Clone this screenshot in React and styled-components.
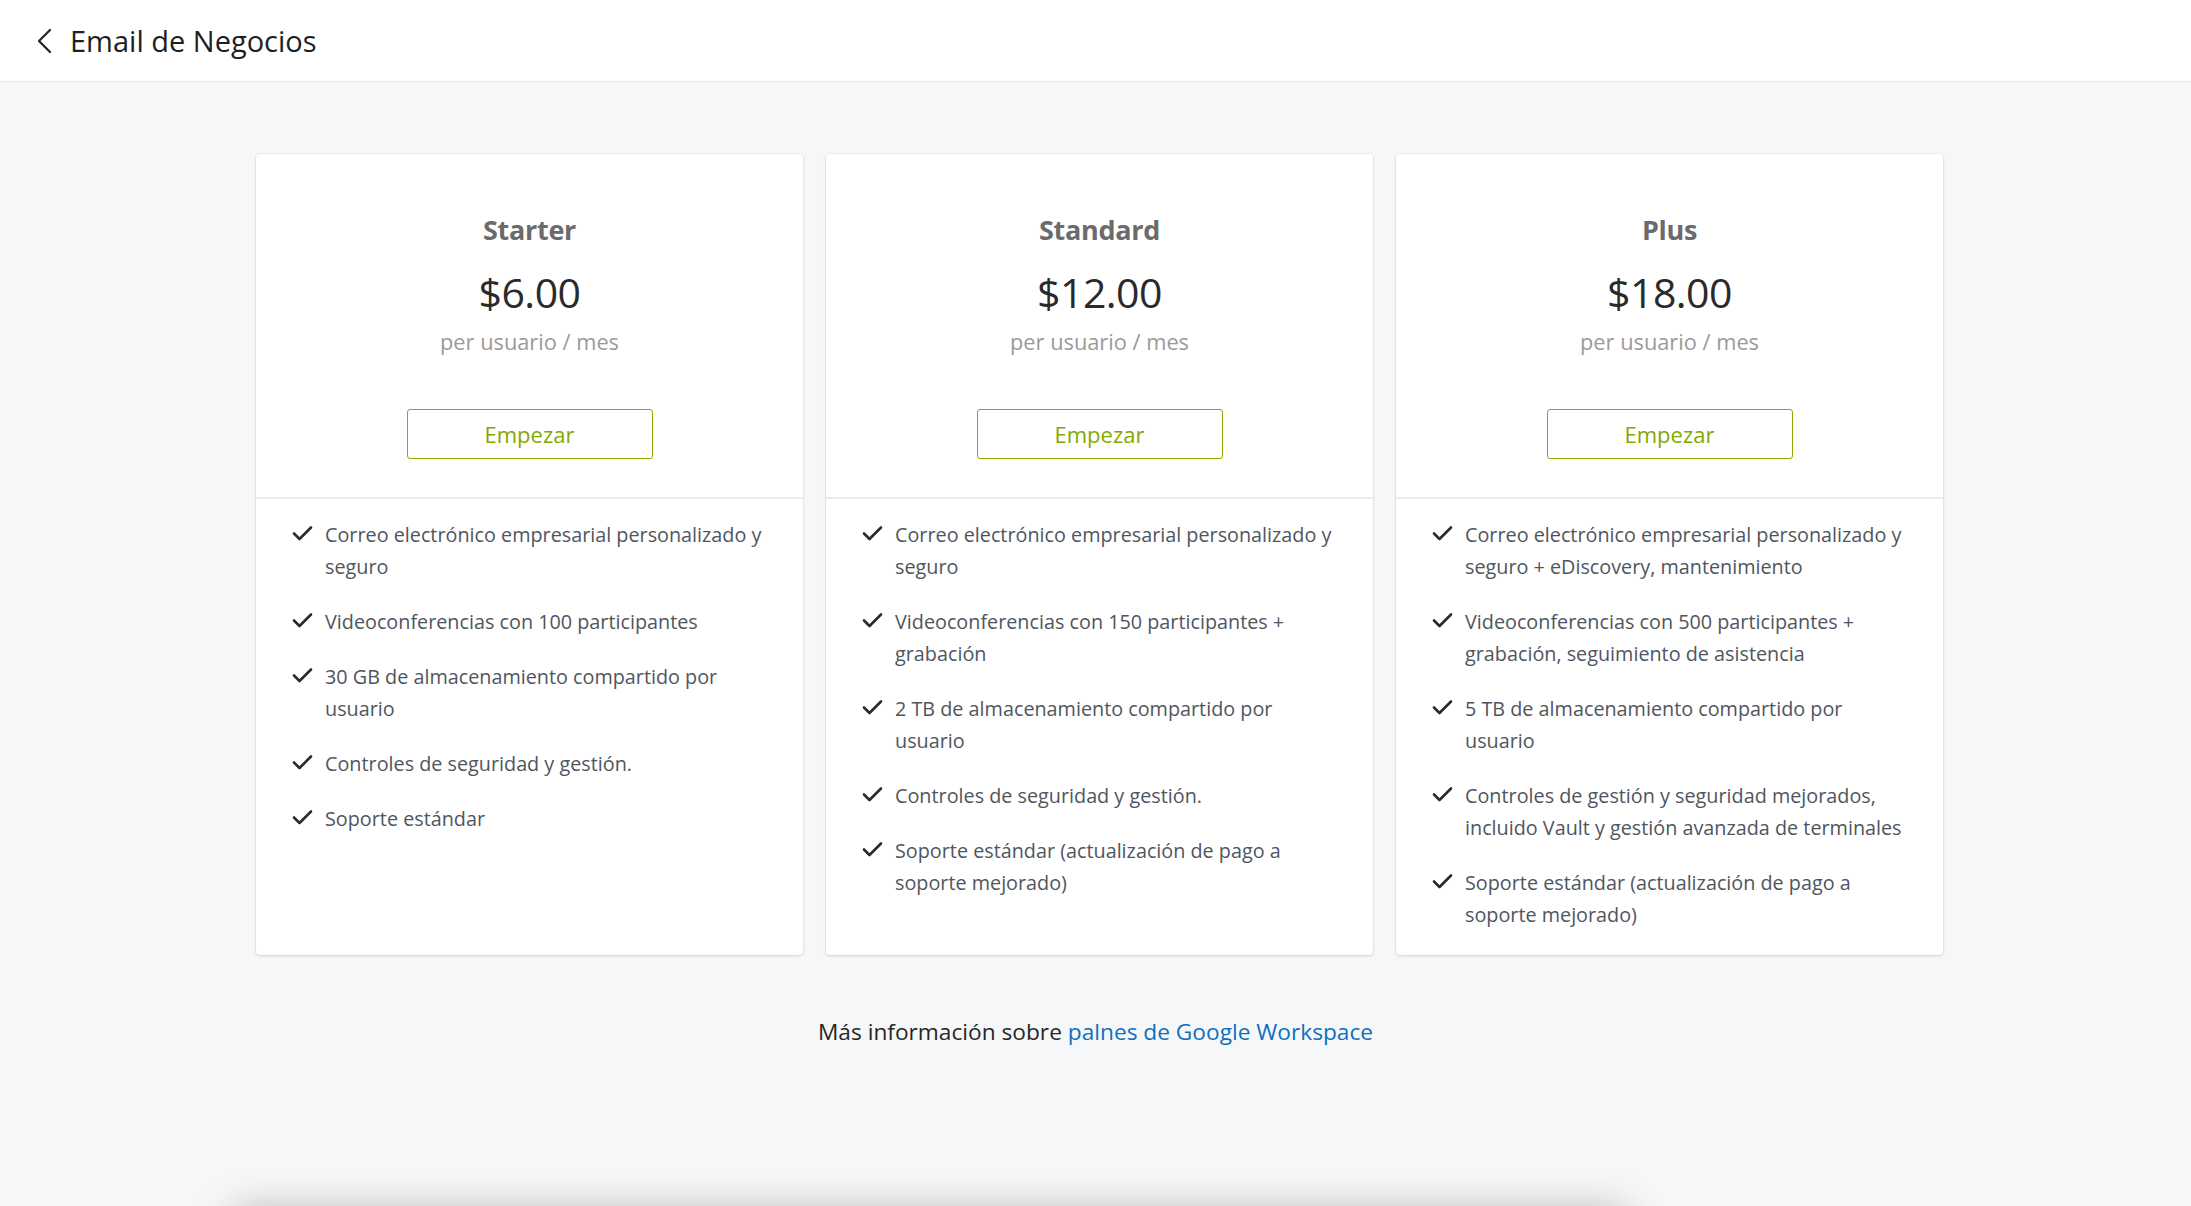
import React from "react";
import styled, { createGlobalStyle } from "styled-components";

const Global = createGlobalStyle`
  html, body { margin: 0; padding: 0; }
  body { background: #f6f7f9; font-family: "Open Sans", Lato, sans-serif; -webkit-font-smoothing: antialiased; }
  * { box-sizing: border-box; }
`;

const Page = styled.div`
  height: 100vh;
  overflow: hidden;
  display: flex;
  flex-direction: column;
`;

const Header = styled.header`
  height: 82px;
  flex: none;
  background: #fff;
  border-bottom: 1px solid #e6e8eb;
  display: flex;
  align-items: center;
  padding-left: 36px;
  gap: 16px;
`;

const BackButton = styled.button`
  border: 0;
  background: none;
  padding: 0;
  display: flex;
  align-items: center;
  color: #222;
  cursor: pointer;
`;

const Title = styled.h1`
  margin: 0;
  font-size: 29px;
  font-weight: 400;
  color: #1f1f1f;
`;

const Main = styled.main`
  padding-top: 72px;
  display: flex;
  flex-direction: column;
  align-items: center;
`;

const Grid = styled.div`
  display: grid;
  grid-template-columns: repeat(3, 547px);
  gap: 23px;
  margin-left: 8px;
`;

const Card = styled.section`
  background: #fff;
  border-radius: 4px;
  box-shadow: 0 1px 3px rgba(0, 0, 0, 0.13), 0 0 0 1px rgba(0, 0, 0, 0.03);
  display: flex;
  flex-direction: column;
`;

const CardHead = styled.div`
  padding: 60px 0 38px;
  display: flex;
  flex-direction: column;
  align-items: center;
  border-bottom: 2px solid #e8eaed;
`;

const PlanName = styled.h2`
  margin: 0;
  font-size: 27px;
  line-height: 32px;
  font-weight: 700;
  color: #6b6b6b;
  letter-spacing: -0.3px;
`;

const Price = styled.div`
  margin-top: 22px;
  font-size: 41px;
  line-height: 48px;
  color: #2a2a2a;
  letter-spacing: -0.5px;
`;

const Per = styled.div`
  margin-top: 12px;
  font-size: 21.8px;
  line-height: 28px;
  color: #9a9a9a;
`;

const StartButton = styled.button`
  margin-top: 53px;
  width: 246px;
  height: 50px;
  border: 1.5px solid #8aab00;
  border-radius: 3px;
  background: #fff;
  color: #84a800;
  font-family: inherit;
  font-size: 22px;
  cursor: pointer;
`;

const Features = styled.ul`
  list-style: none;
  margin: 0;
  padding: 20px 34px 24px 36px;
  display: flex;
  flex-direction: column;
  gap: 23px;
`;

const Feature = styled.li`
  display: flex;
  gap: 11px;
  font-size: 19.8px;
  line-height: 32px;
  color: #4f5660;
`;

const CheckBox = styled.span`
  flex: none;
  width: 22px;
  height: 32px;
  display: flex;
  align-items: center;
  padding-bottom: 4px;
`;

const Footer = styled.p`
  margin: 62px 0 0;
  font-size: 22.7px;
  line-height: 30px;
  color: #262626;
`;

const Link = styled.a`
  color: #0e6fbe;
  text-decoration: none;
`;

const Sheet = styled.div`
  margin-top: 166px;
  margin-left: 232px;
  width: 1396px;
  height: 300px;
  flex: none;
  background: #fff;
  border-radius: 12px;
  box-shadow: 0 -2px 40px rgba(0, 0, 0, 0.28);
`;

const Check = () => (
  <svg width="21" height="16" viewBox="0 0 21 16" fill="none">
    <path d="M2 8.5 L7.5 14 L19 2.5" stroke="#2b2b2b" strokeWidth="2.6" strokeLinecap="round" strokeLinejoin="round" />
  </svg>
);

const Chevron = () => (
  <svg width="18" height="26" viewBox="0 0 18 26" fill="none">
    <path d="M14 2 L3 13 L14 24" stroke="#222" strokeWidth="2.2" strokeLinecap="round" strokeLinejoin="round" />
  </svg>
);

const plans = [
  {
    name: "Starter",
    price: "$6.00",
    features: [
      "Correo electrónico empresarial personalizado y seguro",
      "Videoconferencias con 100 participantes",
      "30 GB de almacenamiento compartido por usuario",
      "Controles de seguridad y gestión.",
      "Soporte estándar",
    ],
  },
  {
    name: "Standard",
    price: "$12.00",
    features: [
      "Correo electrónico empresarial personalizado y seguro",
      "Videoconferencias con 150 participantes + grabación",
      "2 TB de almacenamiento compartido por usuario",
      "Controles de seguridad y gestión.",
      "Soporte estándar (actualización de pago a soporte mejorado)",
    ],
  },
  {
    name: "Plus",
    price: "$18.00",
    features: [
      "Correo electrónico empresarial personalizado y seguro + eDiscovery, mantenimiento",
      "Videoconferencias con 500 participantes + grabación, seguimiento de asistencia",
      "5 TB de almacenamiento compartido por usuario",
      "Controles de gestión y seguridad mejorados, incluido Vault y gestión avanzada de terminales",
      "Soporte estándar (actualización de pago a soporte mejorado)",
    ],
  },
];

export default function App() {
  return (
    <Page>
      <Global />
      <Header>
        <BackButton aria-label="Volver">
          <Chevron />
        </BackButton>
        <Title>Email de Negocios</Title>
      </Header>
      <Main>
        <Grid>
          {plans.map((p) => (
            <Card key={p.name}>
              <CardHead>
                <PlanName>{p.name}</PlanName>
                <Price>{p.price}</Price>
                <Per>per usuario / mes</Per>
                <StartButton>Empezar</StartButton>
              </CardHead>
              <Features>
                {p.features.map((f) => (
                  <Feature key={f}>
                    <CheckBox>
                      <Check />
                    </CheckBox>
                    <span>{f}</span>
                  </Feature>
                ))}
              </Features>
            </Card>
          ))}
        </Grid>
        <Footer>
          Más información sobre <Link href="#">palnes de Google Workspace</Link>
        </Footer>
      </Main>
      <Sheet />
    </Page>
  );
}
